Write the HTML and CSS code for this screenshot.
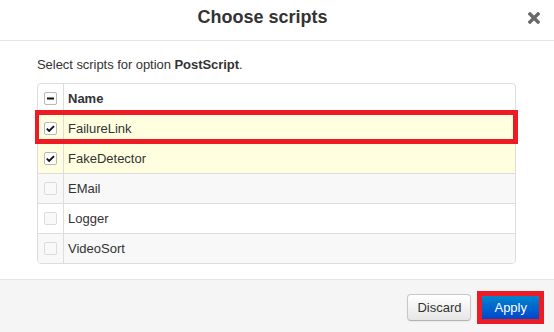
FILE: index.html
```html
<!DOCTYPE html>
<html>
<head>
<meta charset="utf-8">
<link rel="stylesheet" href="styles.css">
</head>
<body>
<div class="modal">
  <div class="modal-header">
    <h3 class="title">Choose scripts</h3>
    <span class="close" aria-label="Close">
      <svg width="12" height="12" viewBox="0 0 12 12"><path d="M2 2 L10 10 M10 2 L2 10" stroke="#6a6a6a" stroke-width="3.4" stroke-linecap="square" fill="none"/></svg>
    </span>
  </div>
  <div class="modal-body">
    <p class="intro">Select scripts for option <strong>PostScript</strong>.</p>
    <div class="grid-wrap">
      <table class="grid">
        <thead>
          <tr>
            <th class="cb-col"><span class="cb"><svg width="13" height="13" viewBox="0 0 13 13"><rect x="3" y="5.5" width="7" height="2" fill="#111"/></svg></span></th>
            <th class="name-col">Name</th>
          </tr>
        </thead>
        <tbody>
          <tr class="sel">
            <td class="cb-col"><span class="cb"><svg width="13" height="13" viewBox="0 0 13 13"><path d="M2.8 6.6 L5.2 9 L10 4.2" stroke="#111" stroke-width="1.9" fill="none"/></svg></span></td>
            <td>FailureLink</td>
          </tr>
          <tr class="sel">
            <td class="cb-col"><span class="cb"><svg width="13" height="13" viewBox="0 0 13 13"><path d="M2.8 6.6 L5.2 9 L10 4.2" stroke="#111" stroke-width="1.9" fill="none"/></svg></span></td>
            <td>FakeDetector</td>
          </tr>
          <tr class="odd">
            <td class="cb-col"><span class="cb off"></span></td>
            <td>EMail</td>
          </tr>
          <tr>
            <td class="cb-col"><span class="cb off"></span></td>
            <td>Logger</td>
          </tr>
          <tr class="odd">
            <td class="cb-col"><span class="cb off"></span></td>
            <td>VideoSort</td>
          </tr>
        </tbody>
      </table>
      <div class="mark mark-row"></div>
    </div>
  </div>
  <div class="modal-footer">
    <button class="btn">Discard</button>
    <button class="btn btn-primary">Apply<span class="mark mark-btn"></span></button>
  </div>
</div>
</body>
</html>
```
FILE: styles.css
```css
* { box-sizing: border-box; }
html, body { margin: 0; padding: 0; background: #fff; }
body {
  font-family: "Liberation Sans", Arial, sans-serif;
  font-size: 13px;
  color: #333;
  width: 554px;
  height: 332px;
  overflow: hidden;
}
.modal { display: flex; flex-direction: column; height: 332px; }
.modal-header {
  display: flex;
  align-items: flex-start;
  height: 41px;
  border-bottom: 1px solid #e5e5e5;
}
.title {
  flex: 1;
  margin: 0;
  padding-top: 7px;
  text-align: center;
  font-size: 18px;
  line-height: 20px;
  font-weight: bold;
  color: #333;
}
.close {
  width: 29px;
  padding: 12px 14px 0 3px;
  line-height: 0;
}
.modal-body { padding: 15px 38px 15px 37px; }
.intro { margin: 0 0 9px 0; line-height: 18px; letter-spacing: -0.05px; }
.intro strong { font-weight: bold; }
.grid-wrap {
  position: relative;
  border: 1px solid #dddddd;
  border-radius: 4px;
  overflow: visible;
}
.grid {
  width: 100%;
  border-collapse: separate;
  border-spacing: 0;
}
.grid th, .grid td {
  box-sizing: border-box;
  height: 30px;
  padding: 0 4px;
  line-height: 28px;
  text-align: left;
  border-top: 1px solid #dddddd;
  border-left: 1px solid #dddddd;
  vertical-align: middle;
}
.grid thead th { border-top: none; height: 29px; font-weight: bold; }
.grid .cb-col { width: 25px; padding: 0; border-left: none; text-align: center; }
.grid tr.sel td { background: #ffffe0; }
.grid tr.odd td { background: #f8f8f8; }
.grid tbody tr:last-child td:first-child { border-bottom-left-radius: 3px; }
.grid tbody tr:last-child td:last-child { border-bottom-right-radius: 3px; }
.cb {
  display: inline-block;
  width: 13px;
  height: 13px;
  border: 1px solid #b9b9b9;
  border-radius: 2px;
  background: #fff;
  vertical-align: middle;
  line-height: 0;
  position: relative;
  top: -1px;
}
.cb svg { position: absolute; left: -1px; top: -1px; }
.cb.off { border-color: #dcdcdc; background: #f9f9f9; }
.mark {
  position: absolute;
  border: 5px solid #ed1c24;
  pointer-events: none;
}
.mark-row { left: -3px; top: 26px; width: 483px; height: 34px; border-left-width: 4px; }
.modal-footer {
  flex: 1;
  display: flex;
  justify-content: flex-end;
  align-items: flex-start;
  gap: 10px;
  padding: 14px 14px 0 0;
  border-top: 1px solid #e5e5e5;
  background: #f5f5f5;
}
.btn {
  position: relative;
  height: 27px;
  padding: 0 9px;
  font-family: "Liberation Sans", Arial, sans-serif;
  font-size: 13px;
  color: #333;
  border: 1px solid #c8c8c8;
  border-bottom-color: #b3b3b3;
  border-radius: 4px;
  background: linear-gradient(#ffffff, #e6e6e6);
  box-shadow: inset 0 1px 0 rgba(255,255,255,.2), 0 1px 2px rgba(0,0,0,.05);
}
.btn-primary {
  padding: 0 12px;
  color: #fff;
  border-color: #0044cc #0044cc #002a80;
  background: linear-gradient(#0088cc, #0044cc);
}
.mark-btn { left: -5px; top: -4px; right: -5px; bottom: -4px; }
```
